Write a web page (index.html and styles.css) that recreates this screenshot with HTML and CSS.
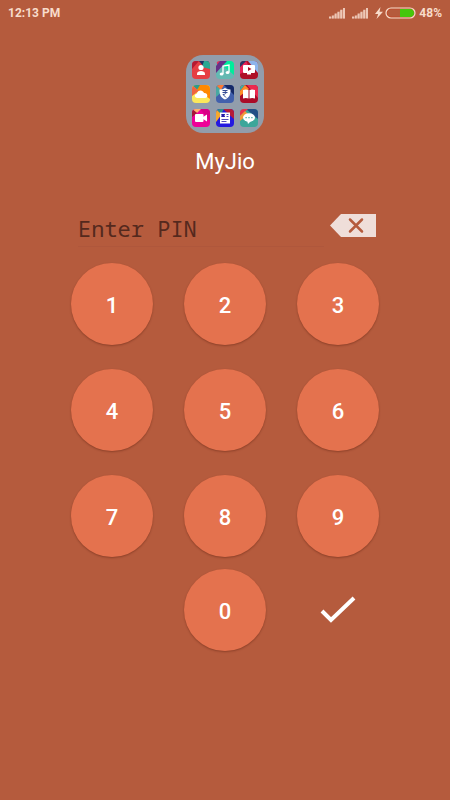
FILE: index.html
```html
<!DOCTYPE html>
<html lang="en">
<head>
<meta charset="utf-8">
<meta name="viewport" content="width=device-width, initial-scale=1">
<title>MyJio</title>
<link rel="stylesheet" href="styles.css">
</head>
<body>
<header class="status">
  <time>12:13 PM</time>
  <div class="indicators">
    <svg class="signal" viewBox="0 0 16 12" aria-hidden="true"><path opacity=".35" d="M0 11.500 16 1v10.500z"/><path d="M0 9.500h2v2H0zM2.800 8.500h2v3h-2zM5.600 6.500h2v5h-2zM8.400 4.700h2v6.800h-2zM11.200 2.800h2v8.700h-2zM14 1h2v10.500h-2z"/></svg>
    <svg class="signal" viewBox="0 0 16 12" aria-hidden="true"><path opacity=".35" d="M0 11.500 16 1v10.500z"/><path d="M0 9.500h2v2H0zM2.800 8.500h2v3h-2zM5.600 6.500h2v5h-2zM8.400 4.700h2v6.800h-2zM11.200 2.800h2v8.700h-2zM14 1h2v10.500h-2z"/></svg>
    <svg class="bolt" viewBox="0 0 8 12" aria-hidden="true"><path d="M5.500 0 0 7h3.200L1.500 12 8 4.800H4.500z"/></svg>
    <svg class="battery" viewBox="0 0 31 12" aria-hidden="true"><rect x="2" y="2" width="27" height="8" rx="4" fill="none" stroke="#cf3a18" stroke-width="1" opacity=".5"/><path fill="#45c70b" d="M15 2h10a4 4 0 0 1 0 8H15z"/><rect x="1" y="1" width="29" height="10" rx="5" fill="none" stroke="#f8dccb" stroke-width="1.200"/></svg>
    <span>48%</span>
  </div>
</header>
<main>
  <svg class="app-icon" viewBox="0 0 78 78" role="img" aria-label="MyJio">
    <defs><clipPath id="tile"><rect width="18" height="18" rx="4"/></clipPath></defs>
    <rect width="78" height="78" rx="17" fill="#929dab"/>
    <g transform="translate(6 6)"><g clip-path="url(#tile)"><path fill="#e63e43" d="M0 0h18v18H0z"/><path fill="#b51932" d="M0 0h7L0 8z"/><path fill="#1d3265" d="m7 0 5 6 6-6z"/><path fill="#28a892" d="M12 0h6v8l-8-2z"/></g><circle cx="9" cy="6.500" r="2.600" fill="#fff"/><path fill="#fff" d="M5 14v-1.500c0-3.500 8-3.500 8 0V14z"/></g>
    <g transform="translate(30 6)"><g clip-path="url(#tile)"><path fill="#63b9b2" d="M0 0h18v18H0z"/><path fill="#00ed9b" d="M9 0h9v14L7 5z"/><path fill="#e6315c" d="M0 0h5L2 6z"/><path fill="#663087" d="M4 0h7L0 12V5z"/></g><path d="M7 13V5l6-1v7" fill="none" stroke="#fff" stroke-width="1.300"/><ellipse cx="5.600" cy="13" rx="1.900" ry="1.500" fill="#fff"/><ellipse cx="11.600" cy="11.500" rx="1.900" ry="1.500" fill="#fff"/></g>
    <g transform="translate(54 6)"><g clip-path="url(#tile)"><path fill="#ae1027" d="M0 0h18v18H0z"/><path fill="#8cb4eb" d="M8 0h10v12z"/><path fill="#e62357" d="M0 6 6 0l4 8-10 5z"/><path fill="#273768" d="M0 0h6L0 6z"/></g><rect x="3" y="4" width="12" height="8" rx="1" fill="#fff"/><path fill="#ae1027" d="m8 6 3.500 2L8 10z"/><path fill="#fff" d="M7 12h4v1.500H7z"/></g>
    <g transform="translate(6 30)"><g clip-path="url(#tile)"><path fill="#fbe85b" d="M0 0h18v18H0z"/><path fill="#ff8800" d="M7 0h11v14L5 5z"/><path fill="#2d9b89" d="M0 0h8L5 5z"/><path fill="#f0643f" d="M0 0 7 6 0 11z"/></g><path fill="#fff" d="M5.500 13C2 13 2 8.800 5 8.800 5.500 4.500 11 4.500 12 8c4-.5 4.500 5 1 5z"/></g>
    <g transform="translate(30 30)"><g clip-path="url(#tile)"><path fill="#4260ac" d="M0 0h18v18H0z"/><path fill="#152867" d="M8 0h10v10z"/><path fill="#48a8a2" d="M0 0 7 6 0 12z"/><path fill="#ff7a32" d="M0 0h8L5 5z"/></g><path fill="#fff" d="M3.500 4.500Q7 4.500 9 3q2 1.500 5.500 1.500c0 5-1 8-5.500 10-4.500-2-5.500-5-5.500-10z"/><path d="M6.500 5.500h5m-5 2h5m-4.500-2c4 0 4 4 0 4l3 3" fill="none" stroke="#334a94"/></g>
    <g transform="translate(54 30)"><g clip-path="url(#tile)"><path fill="#aa0c28" d="M0 0h18v18H0z"/><path fill="#ec294f" d="M7 0h11v13z"/><path fill="#3eb0a3" d="M0 0h5L0 6z"/><path fill="#ff8b28" d="m5 0 4 4-9 7V6z"/></g><path fill="#fff" d="M3 5q3-1 5.500 0v8.500Q6 12.500 3 13.500zM9.500 5Q12 4 15 5v8.500q-3-1-5.500 0z"/></g>
    <g transform="translate(6 54)"><g clip-path="url(#tile)"><path fill="#ee0098" d="M0 0h18v18H0z"/><path fill="#d90086" d="M8 0h10v12z"/><path fill="#ffb06a" d="M0 0h9L5 4z"/><path fill="#a51735" d="m0 0 5 4-5 4z"/></g><rect x="3" y="5" width="8.500" height="8" rx="1" fill="#fff"/><path fill="#fff" d="m11 8 4-2.500v7L11 10z"/></g>
    <g transform="translate(30 54)"><g clip-path="url(#tile)"><path fill="#2419df" d="M0 0h18v18H0z"/><path fill="#b51d39" d="M7 0h11v10z"/><path fill="#f7a72d" d="M0 0 6 5 0 13z"/><path fill="#318c8d" d="M0 0h8L5 5z"/></g><path fill="#fff" d="M4 3.500h10v11H4z"/><path d="M5.500 5.500H9m1.500 0h2M5.500 7.500H9m1.500 0h2M5.500 10.500h7m-7 2h5" stroke="#2419a8" stroke-width=".8"/><path fill="#2419a8" d="M5.500 5h3v3h-3z"/></g>
    <g transform="translate(54 54)"><g clip-path="url(#tile)"><path fill="#3ca69a" d="M0 0h18v18H0z"/><path fill="#224f85" d="M6 0h12v10z"/><path fill="#e9324e" d="M0 0h8L0 7z"/><path fill="#f19b38" d="m5 2 3 3-8 7V7z"/></g><ellipse cx="9" cy="8.500" rx="6" ry="4.300" fill="#fff"/><path fill="#fff" d="M7 11h5l-4 4z"/><path fill="#3ca69a" d="M5.500 8h1.200v1.200H5.500zM8.400 8h1.200v1.200H8.400zM11.300 8h1.200v1.200h-1.200z"/></g>
  </svg>
  <h1>MyJio</h1>
  <form>
    <div class="entry">
      <input type="password" aria-label="PIN" placeholder="Enter PIN" inputmode="numeric">
      <button class="erase" type="button" aria-label="Delete digit"><svg viewBox="0 0 46 23" aria-hidden="true"><path fill="#efded9" d="M0 11.500 11 0h35v23H11z"/><path d="m20 5.500 12 12m0-12-12 12" stroke="#b55b3d" stroke-width="2.500" stroke-linecap="round"/></svg></button>
    </div>
    <div class="keys">
      <button class="key" type="button">1</button>
      <button class="key" type="button">2</button>
      <button class="key" type="button">3</button>
      <button class="key" type="button">4</button>
      <button class="key" type="button">5</button>
      <button class="key" type="button">6</button>
      <button class="key" type="button">7</button>
      <button class="key" type="button">8</button>
      <button class="key" type="button">9</button>
    </div>
    <div class="keys last">
      <button class="key zero" type="button">0</button>
      <button class="confirm" type="submit" aria-label="Confirm"><svg viewBox="0 0 36 28" aria-hidden="true"><path d="m2 15 9 9L34 2" fill="none" stroke="#fff" stroke-width="4"/></svg></button>
    </div>
  </form>
</main>
</body>
</html>
```
FILE: styles.css
```css
* { box-sizing: border-box; }
body {
  margin: 0;
  min-height: 100vh;
  background: #b55b3d;
  color: #fff;
  font-family: Roboto, "Liberation Sans", sans-serif;
}
button { padding: 0; border: 0; background: none; color: inherit; font: inherit; cursor: pointer; }
svg { display: block; }
.status {
  display: flex;
  justify-content: space-between;
  align-items: center;
  height: 26px;
  padding: 0 8px;
  color: #f8dccb;
  font-size: 12px;
  font-weight: 700;
}
.indicators { display: flex; align-items: center; }
.signal { width: 16px; height: 12px; margin-right: 7px; fill: #edc7b6; }
.bolt { width: 8px; height: 12px; margin-right: 2px; fill: #f8dccb; }
.battery { width: 31px; height: 12px; margin-right: 3px; }
main { display: flex; flex-direction: column; align-items: center; padding-top: 29px; }
.app-icon { width: 78px; height: 78px; }
h1 { margin: 14px 0 0; font-size: 22px; line-height: 30px; font-weight: 400; }
form { width: 308px; margin-top: 33px; }
.entry { display: flex; align-items: flex-start; justify-content: space-between; padding: 0 3px 0 7px; }
input {
  width: 246px;
  height: 37px;
  padding: 0;
  border: 0;
  border-bottom: 1px solid #af573c;
  background: none;
  color: #54291d;
  font: 22px/32px "Noto Sans Mono", "DejaVu Sans Mono", monospace;
  outline: 0;
}
input::placeholder { color: #54291d; opacity: 1; }
.erase { margin-top: 4px; }
.erase svg { width: 46px; height: 23px; }
.keys { display: grid; grid-template-columns: repeat(3, 82px); gap: 24px 31px; margin-top: 16px; }
.keys.last { margin-top: 12px; }
.key {
  height: 82px;
  padding-top: 2px;
  border-radius: 50%;
  background: #e4724e;
  font-size: 22px;
  font-weight: 500;
  box-shadow: 0 1px 2px rgba(80, 25, 10, .4);
}
.zero { grid-column: 2; }
.confirm { display: grid; place-items: center; }
.confirm svg { width: 36px; height: 28px; }
```
